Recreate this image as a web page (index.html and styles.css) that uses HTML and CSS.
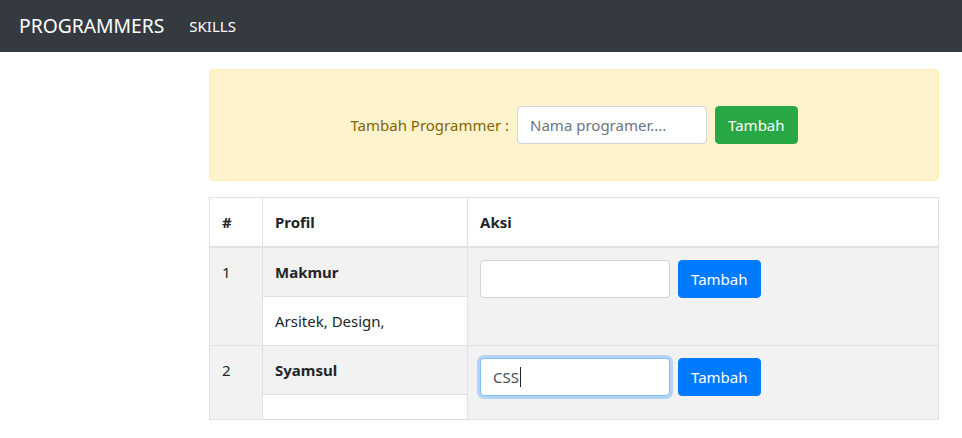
FILE: index.html
```html
<!DOCTYPE html>
<html>
<head>
<meta charset="utf-8">
<link rel="stylesheet" href="styles.css">
</head>
<body>
<nav class="navbar">
  <a class="brand">PROGRAMMERS</a>
  <a class="nav-link">SKILLS</a>
</nav>
<main class="main">
  <div class="alert">
    <label class="alert-label">Tambah Programmer :</label>
    <input class="form-control" type="text" placeholder="Nama programer....">
    <button class="btn btn-success">Tambah</button>
  </div>
  <table class="table">
    <colgroup>
      <col class="col-num">
      <col class="col-profil">
      <col class="col-aksi">
    </colgroup>
    <thead>
      <tr>
        <th>#</th>
        <th>Profil</th>
        <th>Aksi</th>
      </tr>
    </thead>
    <tbody>
      <tr class="row-grey">
        <td>1</td>
        <td class="cell-nested">
          <table class="nested">
            <tr class="row-grey"><td class="bold">Makmur</td></tr>
            <tr class="row-white"><td>Arsitek, Design,</td></tr>
          </table>
        </td>
        <td>
          <div class="aksi">
            <input class="form-control" type="text">
            <button class="btn btn-primary">Tambah</button>
          </div>
        </td>
      </tr>
      <tr class="row-grey">
        <td>2</td>
        <td class="cell-nested">
          <table class="nested">
            <tr class="row-grey"><td class="bold">Syamsul</td></tr>
            <tr class="row-white"><td class="empty"></td></tr>
          </table>
        </td>
        <td>
          <div class="aksi">
            <span class="input-wrap">
              <input class="form-control focused" type="text" value="CSS">
              <span class="caret"></span>
            </span>
            <button class="btn btn-primary">Tambah</button>
          </div>
        </td>
      </tr>
    </tbody>
  </table>
</main>
</body>
</html>
```

FILE: styles.css
```css
* { box-sizing: border-box; }
html, body { margin: 0; padding: 0; }
body {
  font-family: "Noto Sans", "Open Sans", sans-serif;
  font-size: 15px;
  line-height: 24px;
  color: #212529;
  background: #fff;
}
.navbar {
  height: 52px;
  background: #343a40;
  display: flex;
  align-items: center;
  padding: 0 19px;
}
.brand {
  color: #fff;
  font-size: 19.3px;
  line-height: 30px;
  margin-right: 17px;
}
.nav-link {
  color: #fff;
  font-size: 15px;
  padding: 0 8px;
}
.main {
  padding: 17px 23px 0 209px;
}
.alert {
  background: #fff3cd;
  border: 1px solid #ffeeba;
  border-radius: 4px;
  padding: 36px 20px;
  display: flex;
  justify-content: center;
  align-items: center;
  gap: 8px;
  margin-bottom: 16px;
}
.alert-label { color: #856404; }
.form-control {
  width: 190px;
  height: 38px;
  padding: 6px 12px;
  font-family: inherit;
  font-size: 15px;
  color: #495057;
  background: #fff;
  border: 1px solid #ced4da;
  border-radius: 4px;
  outline: none;
}
.form-control::placeholder { color: #6c757d; }
.form-control.focused {
  border-color: #80bdff;
  box-shadow: 0 0 0 3px rgba(0, 123, 255, .25);
}
.input-wrap {
  position: relative;
  display: block;
  height: 38px;
}
.caret {
  position: absolute;
  left: 40px;
  top: 9px;
  width: 1px;
  height: 20px;
  background: #212529;
}
.btn {
  height: 38px;
  padding: 6px 12px;
  font-family: inherit;
  font-size: 15px;
  color: #fff;
  border: 1px solid transparent;
  border-radius: 4px;
}
.btn-success { background: #28a745; border-color: #28a745; }
.btn-primary { background: #007bff; border-color: #007bff; }
.table {
  width: 730px;
  border-collapse: collapse;
  table-layout: fixed;
}
.col-num { width: 53px; }
.col-profil { width: 205px; }
.table th, .table > tbody > tr > td {
  border: 1px solid #dee2e6;
  padding: 12px;
  vertical-align: top;
  text-align: left;
}
.table thead th {
  border-bottom: 2px solid #dee2e6;
  font-weight: 700;
}
.table > tbody > tr > td.cell-nested { padding: 0; }
.row-grey { background: #f2f2f2; }
.row-white { background: #fff; }
.nested {
  width: 100%;
  border-collapse: collapse;
}
.nested td {
  padding: 12px;
  height: 48px;
}
.nested tr + tr td { border-top: 1px solid #dee2e6; }
.nested td.empty { height: 24px; }
.bold { font-weight: 700; }
.aksi {
  display: flex;
  gap: 8px;
  align-items: center;
}
```
